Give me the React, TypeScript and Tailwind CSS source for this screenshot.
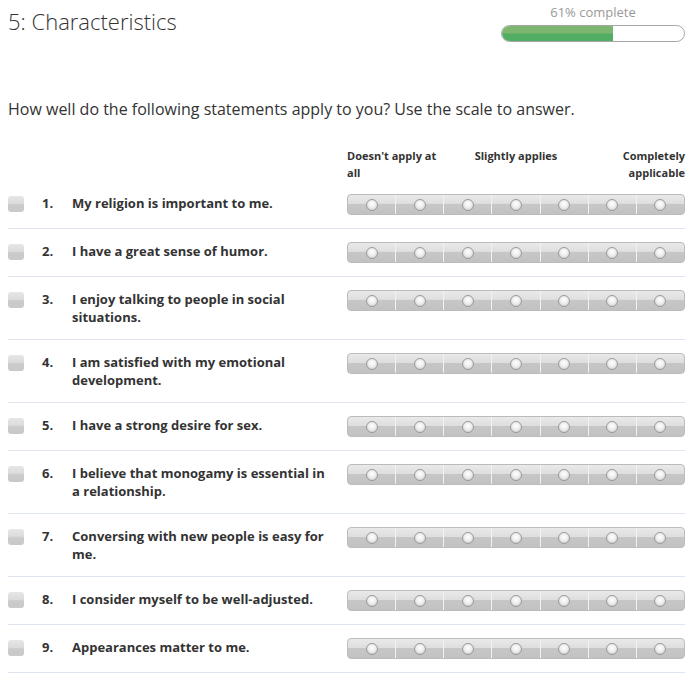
import React from "react";

const questions = [
  "My religion is important to me.",
  "I have a great sense of humor.",
  "I enjoy talking to people in social situations.",
  "I am satisfied with my emotional development.",
  "I have a strong desire for sex.",
  "I believe that monogamy is essential in a relationship.",
  "Conversing with new people is easy for me.",
  "I consider myself to be well-adjusted.",
  "Appearances matter to me.",
];

function RadioBar() {
  return (
    <div className="flex h-[21px] w-[338px] shrink-0 overflow-hidden rounded-[4px] border border-[#bcbcbc] bg-[linear-gradient(to_bottom,#e9e9e9_0%,#dedede_45%,#c6c6c6_50%,#c2c2c2_100%)]">
      {[0, 1, 2, 3, 4, 5, 6].map((i) => (
        <div
          key={i}
          className={
            i === 0
              ? "flex flex-1 items-center justify-center"
              : "flex flex-1 items-center justify-center border-l border-[#f2f2f2]"
          }
        >
          <div className="mt-[1px] h-[12px] w-[12px] rounded-full border border-[#9a9a9a] bg-[radial-gradient(circle_at_50%_40%,#ffffff_0%,#eeeeee_45%,#c4c4c4_100%)]" />
        </div>
      ))}
    </div>
  );
}

export default function App() {
  return (
    <div className="w-[696px] bg-white pl-2 pr-[11px] text-[#333]" style={{ fontFamily: '"Open Sans", "Liberation Sans", sans-serif' }}>
      <div className="flex items-start justify-between">
        <h1 className="mt-[6px] text-[22px] font-light leading-[30px] text-[#333]">5: Characteristics</h1>
        <div className="flex w-[184px] flex-col items-center pt-[3px]">
          <div className="text-[13px] leading-[18px] text-[#999]">61% complete</div>
          <div className="mt-[4px] h-[17px] w-full overflow-hidden rounded-full border border-[#a6a6a6] bg-white">
            <div className="h-full w-[61%] bg-[linear-gradient(to_bottom,#7db66f_0%,#7db66f_48%,#50ad61_52%,#50ad61_100%)]" />
          </div>
        </div>
      </div>
      <p className="mt-[55px] text-[16px] leading-[24px] text-[#333]">
        How well do the following statements apply to you? Use the scale to answer.
      </p>
      <div className="mt-[26px] flex justify-end">
        <div className="grid w-[338px] grid-cols-[2fr_3fr_2fr] text-[11px] font-bold leading-[17px] text-[#333]">
          <div className="text-left">Doesn't apply at all</div>
          <div className="text-center">Slightly applies</div>
          <div className="text-right">Completely applicable</div>
        </div>
      </div>
      <div>
        {questions.map((q, i) => (
          <div key={i} className="flex items-start border-b border-[#dfe5f0] py-[13px]">
            <div className="mt-[2px] h-[16px] w-[16px] shrink-0 rounded-[3px] bg-[linear-gradient(to_bottom,#e6e6e6_0%,#dcdcdc_45%,#cbcbcb_55%,#c9c9c9_100%)]" />
            <div className="ml-[18px] w-[30px] shrink-0 text-[13px] font-bold leading-[18px] text-[#333]">{i + 1}.</div>
            <div className="w-[262px] shrink-0 text-[13px] font-bold leading-[18px] text-[#333]">{q}</div>
            <div className="ml-auto">
              <RadioBar />
            </div>
          </div>
        ))}
      </div>
    </div>
  );
}
